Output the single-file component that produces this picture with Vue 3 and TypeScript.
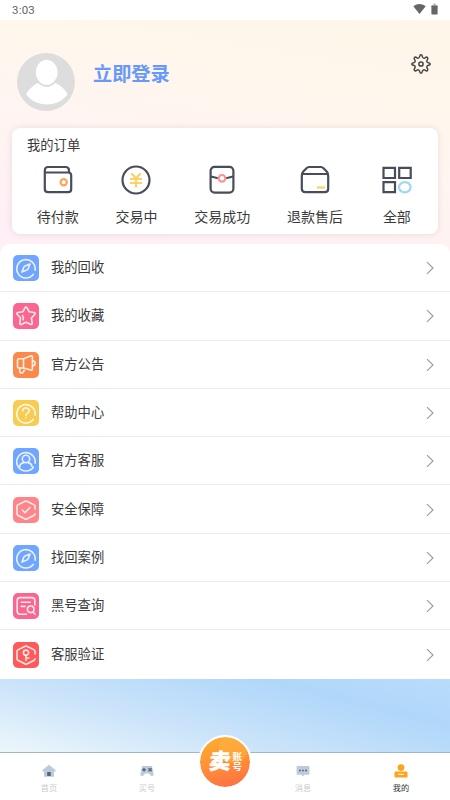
<script setup lang="ts">
type IconName = 'compass' | 'star' | 'horn' | 'help' | 'user' | 'check' | 'search' | 'key'

interface MenuItem {
  label: string
  icon: IconName
  tone: string
}

const menu: MenuItem[] = [
  { label: '我的回收', icon: 'compass', tone: 'blue' },
  { label: '我的收藏', icon: 'star', tone: 'pink' },
  { label: '官方公告', icon: 'horn', tone: 'orange' },
  { label: '帮助中心', icon: 'help', tone: 'yellow' },
  { label: '官方客服', icon: 'user', tone: 'blue' },
  { label: '安全保障', icon: 'check', tone: 'coral' },
  { label: '找回案例', icon: 'compass', tone: 'blue' },
  { label: '黑号查询', icon: 'search', tone: 'pink' },
  { label: '客服验证', icon: 'key', tone: 'red' },
]

const ring = 'M20.4 19.3A9.2 9.2 0 1 1 22.1 15.2'
const shield = 'M22 12V9.2Q22 8.3 21.2 7.9L13.8 4.3Q13 3.9 12.2 4.3L4.8 7.9Q4 8.3 4 9.2V16.8Q4 17.7 4.8 18.2L12.2 22Q13 22.4 13.8 22L21.2 18.2Q22 17.7 22 16.8'

const paths: Record<IconName, string[]> = {
  compass: [ring, 'M17.1 9L14.9 14.1Q14.5 14.8 13.8 15.1L8.9 17L11 11.9Q11.4 11.2 12.1 10.9Z'],
  star: [
    'M12 4.7Q13 3.2 14 4.7L16 8.7L21 9.5Q23 10 21.7 11.5L18.4 15L19.2 20Q19.3 22 17.4 21.3L13 19.3L8.6 21.3Q6.7 22 6.8 20L7.6 15L4.3 11.5Q3 10 5 9.5L10 8.7Z',
    'M9.4 12.7Q11.1 14.2 10.3 16.8',
  ],
  horn: [
    'M10.5 6.8H6Q4.5 6.8 4.5 8.3V14.5Q4.5 16 6 16H10.5Z',
    'M10.5 6.8L17.7 4Q19.4 3.5 19.4 5.1V16.8Q19.4 18.6 17.7 17.9L10.5 16',
    'M19.8 8.8Q22.2 9.2 22.2 11.3Q22.2 13.5 19.8 14M6.7 16V19.3Q7.2 21.9 9.8 20.6L11.4 18.3',
  ],
  help: [ring, 'M9.8 11Q9.8 8 13 8Q16.2 8 16.2 10.8Q16.2 12.4 14.3 13.4Q13 14.1 13 15.6', 'M13 18V18.1'],
  user: [ring, 'M16.7 10.9A3.7 3.7 0 1 1 9.3 10.9A3.7 3.7 0 1 1 16.7 10.9', 'M6.6 19.1Q7 14.8 11.2 14.6M14.8 14.6Q18.3 15 19.1 18.4'],
  check: [shield, 'M9.3 13L12 15.7L17 10.5'],
  search: ['M21.8 12V7.5Q21.8 4.6 18.9 4.6H7Q4.2 4.6 4.2 7.5V18.3Q4.2 21.2 7 21.2H13.5', 'M8.3 9.3H17.2M8.3 13.4H12', 'M21 16.3A3.3 3.3 0 1 1 14.4 16.3A3.3 3.3 0 1 1 21 16.3M19.9 18.9L22 21.2'],
  key: [shield, 'M15.6 10.7A2.6 2.6 0 1 1 10.4 10.7A2.6 2.6 0 1 1 15.6 10.7', 'M13 13.3V18.4M13 16H15.8'],
}
</script>

<template>
  <main class="page">
    <header class="status">
      <span>3:03</span>
      <div class="status-icons">
        <svg width="13" height="12" viewBox="0 0 13 12"><path d="M.3 3.2Q6.5-1.4 12.7 3.2L6.5 11Z" fill="#666" /></svg>
        <svg width="7" height="12" viewBox="0 0 7 12"><path d="M2.3.5H4.7V2H6.6V4H.4V2H2.3Z" fill="#b5b5b5" /><rect x=".4" y="2.8" width="6.2" height="8.6" rx=".6" fill="#666" /></svg>
      </div>
    </header>

    <section class="profile">
      <svg class="avatar" viewBox="0 0 58 58">
        <circle cx="29" cy="29" r="29" fill="#ddd" />
        <path d="M9 41C13 35 17 32 21 30Q30 38 38 30C43 32 47 35 50.7 41C46 48 38 51.5 30 51.5S14 48 9 41Z" fill="#fff" />
        <ellipse cx="29.7" cy="19.3" rx="11.6" ry="13.2" fill="#fff" stroke="#ddd" stroke-width="1.5" />
      </svg>
      <h1>立即登录</h1>
      <svg class="gear" viewBox="0 0 20 20" fill="none" stroke="#444" stroke-width="1.5" stroke-linejoin="round">
        <path d="M8.7 2.5Q8.9.8 10 .8T11.3 2.5Q11.5 3.7 12.6 4.1Q13.5 4.4 14.3 3.7Q15.6 2.7 16.5 3.5T16.3 5.7Q15.6 6.5 15.9 7.4Q16.3 8.5 17.5 8.7Q19.2 8.9 19.2 10T17.5 11.3Q16.3 11.5 15.9 12.6Q15.6 13.5 16.3 14.3Q17.3 15.6 16.5 16.5T14.3 16.3Q13.5 15.6 12.6 15.9Q11.5 16.3 11.3 17.5Q11.1 19.2 10 19.2T8.7 17.5Q8.5 16.3 7.4 15.9Q6.5 15.6 5.7 16.3Q4.4 17.3 3.5 16.5T3.7 14.3Q4.4 13.5 4.1 12.6Q3.7 11.5 2.5 11.3Q.8 11.1 .8 10T2.5 8.7Q3.7 8.5 4.1 7.4Q4.4 6.5 3.7 5.7Q2.7 4.4 3.5 3.5T5.7 3.7Q6.5 4.4 7.4 4.1Q8.5 3.7 8.7 2.5Z" />
        <circle cx="10" cy="10" r="2.1" />
      </svg>
    </section>

    <section class="orders">
      <h2>我的订单</h2>
      <div class="order-list">
        <div class="order">
          <svg viewBox="0 0 30 30" fill="none" stroke="#474e59" stroke-width="2.2">
            <path d="M26 7.5V5.5Q26 2 22.5 2H5Q1.8 2 1.8 5.5V24Q1.8 27.2 5 27.2H25.2Q28.2 27.2 28.2 24V10.5Q28.2 7.5 25.2 7.5H2" />
            <circle cx="20.7" cy="17.2" r="3.1" stroke="#ffa35c" />
          </svg>
          <span>待付款</span>
        </div>
        <div class="order">
          <svg viewBox="0 0 30 30" fill="none" stroke="#474e59" stroke-width="2.2">
            <circle cx="15" cy="15" r="13.5" />
            <path d="M10.3 8.5L15 13L19.7 8.5M15 13V22.5M9 14H21M9 18H21" stroke="#ffd064" />
          </svg>
          <span>交易中</span>
        </div>
        <div class="order">
          <svg viewBox="0 0 30 30" fill="none" stroke="#474e59" stroke-width="2.2">
            <rect x="3.6" y="1.8" width="22.8" height="25.8" rx="4" />
            <path d="M4 11.5L11 13.2M26 11.5L19 13.2" />
            <circle cx="15" cy="13.3" r="3.3" stroke="#ff9297" />
          </svg>
          <span>交易成功</span>
        </div>
        <div class="order">
          <svg viewBox="0 0 30 30" fill="none" stroke="#474e59" stroke-width="2.2">
            <path d="M1.8 11Q1.8 8.2 3.3 6.6L6.5 3.2Q7.6 2 9 2H21Q22.4 2 23.5 3.2L26.7 6.6Q28.2 8.2 28.2 11V23.7Q28.2 27.2 24.7 27.2H5.3Q1.8 27.2 1.8 23.7ZM2.2 9H27.8" />
            <path d="M17 22.5H25" stroke="#ffd064" />
          </svg>
          <span>退款售后</span>
        </div>
        <div class="order">
          <svg viewBox="0 0 30 30" fill="none" stroke="#474e59" stroke-width="2.2">
            <path d="M1.5 2.8H13V13H1.5ZM17.2 2.8H28.7V13H17.2ZM1.5 17.2H13V27.2H1.5Z" />
            <ellipse cx="22.8" cy="22.2" rx="5.8" ry="5.1" stroke="#a0d8f0" />
          </svg>
          <span>全部</span>
        </div>
      </div>
    </section>

    <nav class="menu">
      <div v-for="item in menu" :key="item.label" class="row">
        <span class="tile" :class="item.tone">
          <svg viewBox="0 0 26 26"><path v-for="d in paths[item.icon]" :key="d" :d="d" /></svg>
        </span>
        <span class="label">{{ item.label }}</span>
        <svg class="chevron" viewBox="0 0 8 14"><path d="M1 1.2L7 7L1 12.8" /></svg>
      </div>
    </nav>

    <footer class="tabs">
      <div class="tab">
        <svg viewBox="0 0 14 14"><path d="M7 .8L13.5 6V7.5H12V12.8H2V7.5H.5V6Z" fill="#bdcad9" /><path d="M5.2 8H8.8V12H5.2Z" fill="#53677c" /></svg>
        <span>首页</span>
      </div>
      <div class="tab">
        <svg viewBox="0 0 14 14"><path d="M2 2H12L13.8 11.5L11 12L9 9.5H5L3 12L.2 11.5Z" fill="#bdcad9" /><path d="M2.2 5.8H5.8M4 4V7.6M8.5 4.3L11.7 7.3M11.7 4.3L8.5 7.3" stroke="#53677c" stroke-width="1.4" /></svg>
        <span>买号</span>
      </div>
      <div class="sell">
        <div class="sell-button">
          <strong>卖</strong>
          <span class="sell-sub"><b>账</b><b>号</b></span>
        </div>
      </div>
      <div class="tab">
        <svg viewBox="0 0 14 14"><path d="M1.5 2H12.5Q13.4 2 13.4 3V10Q13.4 10.8 12.5 10.8H8.5L7 12.4L5.5 10.8H1.5Q.6 10.8 .6 10V3Q.6 2 1.5 2Z" fill="#bdcad9" /><path d="M3 6.5H4.8M6.1 6.5H7.9M9.2 6.5H11" stroke="#53677c" stroke-width="1.4" /></svg>
        <span>消息</span>
      </div>
      <div class="tab active">
        <svg viewBox="0 0 14 14"><circle cx="7" cy="3.6" r="3.4" fill="#ffa31a" /><rect x=".5" y="7.6" width="13" height="6" rx="1.2" fill="#ffa31a" /><path d="M4 10.3H10" stroke="#fff" /></svg>
        <span>我的</span>
      </div>
    </footer>
  </main>
</template>

<style>
body {
  margin: 0;
}
</style>

<style scoped>
.page {
  box-sizing: border-box;
  width: 450px;
  height: 800px;
  display: flex;
  flex-direction: column;
  overflow: hidden;
  color: #3a3a3a;
  font-family: Roboto, "Noto Sans CJK SC", sans-serif;
  background:
    linear-gradient(194deg, #b9dcfa 0%, #b0d7fa 26%, #cce4fa 63%, #edf7fb 100%) 0 678px / 450px 75px no-repeat,
    linear-gradient(190deg, #fff6e9 0%, #fff6ed 32%, #fff5f1 50%, #fff1f3 74%, #ffeef8 100%) 0 20px / 450px 240px no-repeat,
    #fff;
}
.status {
  height: 20px;
  flex: none;
  display: flex;
  justify-content: space-between;
  box-sizing: border-box;
  padding: 0 12px;
  background: #fff;
  color: #666;
  font-size: 11.5px;
  line-height: 20px;
  letter-spacing: .2px;
}
.status-icons {
  display: flex;
  gap: 5.5px;
  padding-top: 3px;
}
.profile {
  height: 108px;
  flex: none;
  box-sizing: border-box;
  padding: 33px 19px 0 17.4px;
  display: flex;
  align-items: flex-start;
}
.avatar {
  width: 58px;
  height: 58px;
}
h1 {
  flex: 1;
  margin: 8px 0 0 17.6px;
  color: #6699fb;
  font-size: 19.2px;
  line-height: 28px;
  font-weight: 700;
}
.gear {
  width: 20px;
  height: 20px;
  margin-top: .5px;
}
.orders {
  height: 106px;
  flex: none;
  box-sizing: border-box;
  margin: 0 12px 10px;
  background: #fff;
  border-radius: 8px;
  box-shadow: 0 0 6px rgba(90, 50, 40, .12);
}
h2 {
  margin: 0;
  padding: 8px 15px 0;
  font-size: 13.3px;
  line-height: 20px;
  font-weight: 400;
}
.order-list {
  display: flex;
  gap: 36.8px;
  padding: 9px 0 0 24.7px;
}
.order {
  display: flex;
  flex-direction: column;
  align-items: center;
}
.order:last-child {
  margin-left: 2px;
}
.order svg {
  width: 30px;
  height: 30px;
}
.order span {
  margin-top: 12px;
  font-size: 14px;
  line-height: 20px;
}
.menu {
  height: 434.7px;
  flex: none;
  display: flex;
  flex-direction: column;
  background: #fff;
  border-radius: 10px 10px 0 0;
}
.row {
  flex: 1;
  display: flex;
  align-items: center;
  padding: 1px 16px 0 12.5px;
  border-bottom: 1px solid #ebebeb;
}
.row:last-child {
  border-bottom-color: #fff;
}
.tile {
  width: 26px;
  height: 26px;
  border-radius: 5px;
}
.tile svg {
  display: block;
  fill: none;
  stroke: #fff;
  stroke-opacity: .85;
  stroke-width: 1.6;
  stroke-linecap: round;
  stroke-linejoin: round;
}
.blue { background: #70a6ff; }
.pink { background: #fa668f; }
.orange { background: #fa894b; }
.yellow { background: #f7cc50; }
.coral { background: #ff858a; }
.red { background: #ff5959; }
.label {
  flex: 1;
  margin-left: 12.5px;
  font-size: 13.3px;
  line-height: 20px;
}
.chevron {
  width: 8px;
  height: 14px;
  fill: none;
  stroke: #999;
  stroke-width: 1.1;
}
.tabs {
  flex: none;
  display: flex;
  height: 47px;
  margin-top: auto;
  background: #fff;
  box-shadow: 0 -1px 0 #a5b4c3;
}
.tab {
  width: 98px;
  display: flex;
  flex-direction: column;
  align-items: center;
  padding-top: 11px;
  color: #ccc;
  font-size: 8.2px;
}
.tab svg {
  width: 14px;
  height: 14px;
}
.tab span {
  margin-top: 4px;
  line-height: 12px;
}
.tab.active {
  color: #333;
}
.sell {
  width: 58px;
}
.sell-button {
  box-sizing: border-box;
  width: 54px;
  height: 54px;
  margin: -18.5px 0 0 2.4px;
  border: 2.5px solid #fff;
  border-radius: 50%;
  background: radial-gradient(circle at 67% 22%, #ffb34080 0 28%, transparent 29%), linear-gradient(165deg, #ffb02e, #ff9136 50%, #ff6947) padding-box;
  color: #fff;
  display: flex;
  align-items: center;
  justify-content: center;
  gap: 2px;
}
.sell-button strong {
  font-size: 21.5px;
  line-height: 24px;
  font-weight: 900;
  transform: skewX(-5deg);
  -webkit-text-stroke: .5px #fff;
}
.sell-sub {
  display: flex;
  flex-direction: column;
  font-size: 9.5px;
  line-height: 10px;
}
</style>
